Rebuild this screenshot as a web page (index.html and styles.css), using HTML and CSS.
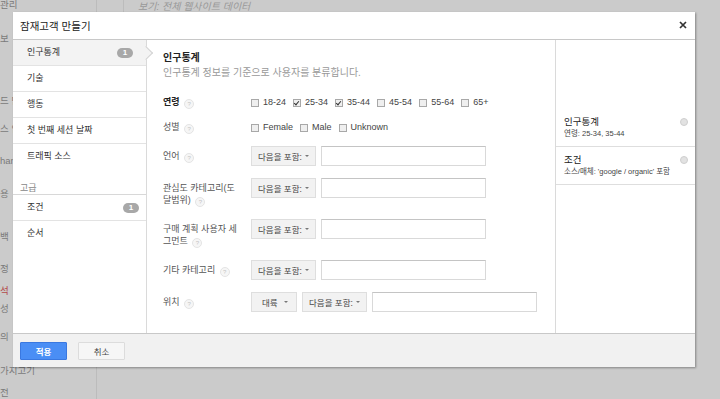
FILE: index.html
```html
<!DOCTYPE html>
<html lang="ko">

<head>
    <title>잠재고객 만들기</title>
    <meta name="viewport" content="width=device-width, initial-scale=1.0">
    <link rel="stylesheet" href="styles.css">
</head>

<body>
    <div class="page">
        <div class="side">
            <div>관리</div>
            <div>보</div>
            <div>드 만</div>
            <div>스 인</div>
            <div>han</div>
            <div>용</div>
            <div>백</div>
            <div>정</div>
            <div class="hot">석</div>
            <div>성</div>
            <div>의</div>
            <div>가지고기</div>
            <div>전</div>
        </div>
        <div class="main">
            <div class="main-top">
                <div class="crumb"></div>
                <div class="view">보기: 전체 웹사이트 데이터</div>
            </div>
        </div>
    </div>

    <div class="modal">
        <div class="modal-head">
            <span class="modal-title">잠재고객 만들기</span>
            <svg class="close" width="8" height="8" viewBox="0 0 8 8">
                <path d="M1 1 L7 7 M7 1 L1 7" stroke="#333" stroke-width="1.7" />
            </svg>
        </div>

        <div class="modal-body">
            <div class="seg-nav">
                <div class="nav-item selected">인구통계 <span class="badge">1</span></div>
                <div class="nav-item">기술</div>
                <div class="nav-item">행동</div>
                <div class="nav-item">첫 번째 세션 날짜</div>
                <div class="nav-item last">트래픽 소스</div>
                <div class="nav-group">고급</div>
                <div class="nav-item">조건 <span class="badge">1</span></div>
                <div class="nav-item last">순서</div>
            </div>

            <div class="seg-form">
                <h2>인구통계</h2>
                <div class="sub">인구통계 정보를 기준으로 사용자를 분류합니다.</div>

                <div class="row check-row">
                    <div class="label strong">연령 <span class="help"></span></div>
                    <div class="checks">
                        <span class="check"><span class="cb"></span>18-24</span>
                        <span class="check"><span class="cb on"></span>25-34</span>
                        <span class="check"><span class="cb on"></span>35-44</span>
                        <span class="check"><span class="cb"></span>45-54</span>
                        <span class="check"><span class="cb"></span>55-64</span>
                        <span class="check"><span class="cb"></span>65+</span>
                    </div>
                </div>

                <div class="row check-row">
                    <div class="label">성별 <span class="help"></span></div>
                    <div class="checks">
                        <span class="check"><span class="cb"></span>Female</span>
                        <span class="check"><span class="cb"></span>Male</span>
                        <span class="check"><span class="cb"></span>Unknown</span>
                    </div>
                </div>

                <div class="row">
                    <div class="label">언어 <span class="help"></span></div>
                    <div class="controls">
                        <span class="drop">다음을 포함: <span class="caret"></span></span>
                        <span class="field"></span>
                    </div>
                </div>

                <div class="row">
                    <div class="label">관심도 카테고리(도달범위) <span class="help"></span></div>
                    <div class="controls">
                        <span class="drop">다음을 포함: <span class="caret"></span></span>
                        <span class="field"></span>
                    </div>
                </div>

                <div class="row">
                    <div class="label">구매 계획 사용자 세그먼트 <span class="help"></span></div>
                    <div class="controls">
                        <span class="drop">다음을 포함: <span class="caret"></span></span>
                        <span class="field"></span>
                    </div>
                </div>

                <div class="row">
                    <div class="label">기타 카테고리 <span class="help"></span></div>
                    <div class="controls">
                        <span class="drop">다음을 포함: <span class="caret"></span></span>
                        <span class="field"></span>
                    </div>
                </div>

                <div class="row">
                    <div class="label">위치 <span class="help"></span></div>
                    <div class="controls">
                        <span class="drop short">대륙 <span class="caret"></span></span>
                        <span class="drop">다음을 포함: <span class="caret"></span></span>
                        <span class="field"></span>
                    </div>
                </div>
            </div>

            <div class="summary">
                <div class="sum-item">
                    <div>
                        <div class="sum-title">인구통계</div>
                        <div class="sum-text">연령: 25-34, 35-44</div>
                    </div>
                    <span class="remove"></span>
                </div>
                <div class="sum-item">
                    <div>
                        <div class="sum-title">조건</div>
                        <div class="sum-text">소스/매체: 'google / organic' 포함</div>
                    </div>
                    <span class="remove"></span>
                </div>
            </div>
        </div>

        <div class="modal-foot">
            <button class="btn primary">적용</button>
            <button class="btn">취소</button>
        </div>
    </div>
</body>

</html>
```

FILE: styles.css
```css
body {
    margin: 0;
    padding: 0;
    background-color: #cbcbcb;
    font-family: "Liberation Sans", "Noto Sans CJK KR", sans-serif;
    font-size: 9px;
    color: #333;
    overflow: hidden;
}

/* page behind the dialog */
.page {
    display: flex;
    height: 399px;
}

.side {
    width: 96px;
    border-right: 1px solid #bcbcbc;
    display: grid;
    grid-template-rows: 11px 34px 62px 28px 32px 33px 43px 32px 22px 18px 28px 34px 22px;
    align-items: end;
    font-size: 9.5px;
    line-height: 12px;
    color: #7a7a7a;
    white-space: nowrap;
    overflow: hidden;
}

.side .hot {
    color: #b34a4a;
}

.main {
    flex: 1;
}

.main-top {
    display: flex;
    height: 14px;
}

.crumb {
    width: 26px;
    border-right: 1px solid #bcbcbc;
}

.view {
    padding-left: 14px;
    font-style: italic;
    color: #999;
    font-size: 10px;
    line-height: 14px;
}

/* dialog */
.modal {
    position: absolute;
    left: 13px;
    top: 12px;
    width: 682px;
    height: 355px;
    background: #fff;
    box-shadow: 1px 1px 2px rgba(0, 0, 0, 0.35);
    display: flex;
    flex-direction: column;
}

.modal-head {
    height: 27px;
    border-bottom: 1px solid #c8c8c8;
    display: flex;
    align-items: center;
    justify-content: space-between;
    padding: 0 8px 0 7px;
}

.modal-title {
    font-size: 10.5px;
    color: #222;
}

.close {
    margin-top: -1px;
}

.modal-body {
    display: flex;
    height: 293px;
}

.seg-nav {
    width: 133px;
    border-right: 1px solid #dadada;
}

.nav-item {
    position: relative;
    height: 25px;
    line-height: 25px;
    padding: 0 7px 0 14px;
    border-bottom: 1px solid #e3e3e3;
    display: flex;
    justify-content: space-between;
    align-items: center;
    color: #333;
}

.nav-item.last {
    border-bottom: none;
}

.nav-item.selected {
    background: #f3f3f3;
    padding-right: 13px;
}

.nav-item.selected::after {
    content: "";
    position: absolute;
    right: -5px;
    top: 8px;
    width: 9px;
    height: 9px;
    background: #f3f3f3;
    border-top: 1px solid #d4d4d4;
    border-right: 1px solid #d4d4d4;
    transform: rotate(45deg);
}

.nav-group {
    padding: 13px 0 0 7px;
    line-height: 12px;
    color: #888;
    border-bottom: 1px solid #d8d8d8;
}

.badge {
    width: 16px;
    height: 10px;
    line-height: 10px;
    border-radius: 5px;
    background: #a8a8a8;
    color: #fff;
    font-size: 8px;
    font-weight: bold;
    text-align: center;
}

.seg-form {
    width: 392px;
    padding: 10px 0 0 16px;
    border-right: 1px solid #dadada;
}

h2 {
    margin: 0;
    font-size: 10px;
    line-height: 16px;
    color: #222;
}

.sub {
    color: #999;
    line-height: 14px;
    margin-bottom: 16px;
    font-size: 10px;
}

.row {
    display: flex;
    align-items: flex-start;
    margin-bottom: 12px;
}

.label {
    width: 80px;
    margin-right: 8px;
    padding-top: 4px;
    line-height: 12px;
    color: #555;
    word-break: break-all;
}

.label.strong {
    color: #222;
    font-weight: bold;
}

.check-row .label {
    padding-top: 0;
    line-height: 13px;
}

.help {
    display: inline-block;
    width: 8px;
    height: 8px;
    border-radius: 50%;
    border: 1px solid #e4e4e4;
    background: #f6f6f6;
    vertical-align: -1px;
    margin-left: 2px;
    text-align: center;
}

.help::after {
    content: "?";
    display: block;
    line-height: 8px;
    color: #c4c4c4;
    font-size: 6px;
    font-weight: normal;
}

.checks {
    display: flex;
    line-height: 13px;
    color: #444;
    font-size: 9px;
}

.check {
    display: flex;
    align-items: center;
    margin-right: 7px;
}

.cb {
    position: relative;
    width: 6px;
    height: 6px;
    border: 1px solid #a8a8a8;
    background: #efefef;
    margin-right: 4px;
}

.cb.on::after {
    content: "";
    position: absolute;
    left: 1px;
    top: 0;
    width: 2px;
    height: 4px;
    border-right: 1px solid #333;
    border-bottom: 1px solid #333;
    transform: rotate(40deg);
}

.controls {
    display: flex;
    gap: 5px;
}

.drop {
    box-sizing: border-box;
    width: 65px;
    height: 20px;
    padding: 0 6px;
    display: flex;
    align-items: center;
    justify-content: space-between;
    background: #f2f2f2;
    border: 1px solid #dedede;
    color: #444;
    font-size: 8.5px;
}

.drop.short {
    width: 46px;
    padding: 0 8px 0 10px;
}

.caret {
    width: 0;
    height: 0;
    border-left: 2px solid transparent;
    border-right: 2px solid transparent;
    border-top: 2px solid #777;
}

.field {
    box-sizing: border-box;
    width: 165px;
    height: 20px;
    border: 1px solid #d9d9d9;
    border-top-color: #c4c4c4;
    background: #fff;
}

.summary {
    flex: 1;
    padding-top: 69px;
}

.sum-item {
    display: flex;
    justify-content: space-between;
    align-items: flex-start;
    padding: 7px 7px 7px 8px;
    border-bottom: 1px solid #dedede;
}

.sum-title {
    font-size: 9.5px;
    line-height: 12px;
    color: #222;
}

.sum-text {
    font-size: 7.5px;
    line-height: 11px;
    color: #444;
}

.remove {
    width: 6px;
    height: 6px;
    margin-top: 2px;
    border-radius: 50%;
    background: #e2e2e2;
    border: 1px solid #cfcfcf;
}

.modal-foot {
    height: 33px;
    border-top: 1px solid #c8c8c8;
    background: #f1f1f1;
    display: flex;
    align-items: center;
    gap: 11px;
    padding-left: 7px;
}

.btn {
    width: 47px;
    height: 18px;
    padding: 0;
    border: 1px solid #dcdcdc;
    background: #f6f6f6;
    color: #444;
    font-family: inherit;
    font-size: 8.5px;
    border-radius: 1px;
}

.btn.primary {
    background: #4a8ef5;
    border-color: #3a78e0;
    color: #fff;
    font-weight: bold;
}
```
